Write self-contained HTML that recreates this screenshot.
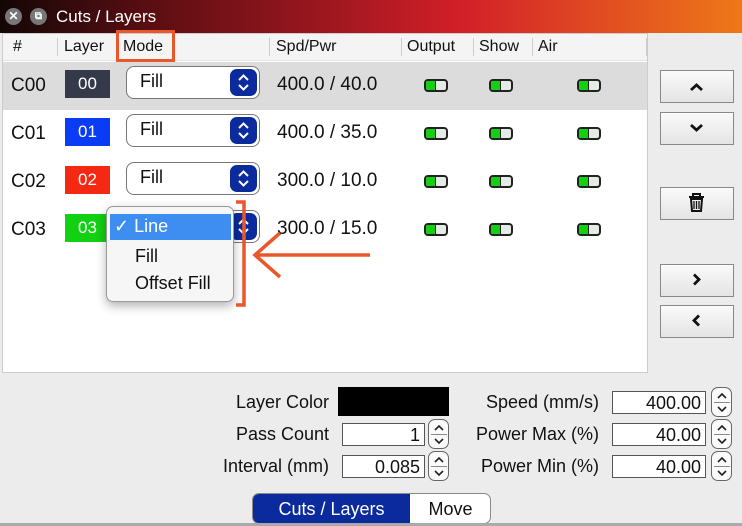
<!DOCTYPE html>
<html><head><style>
*{margin:0;padding:0;box-sizing:border-box}
body{width:742px;height:526px;background:#ececec;font-family:"Liberation Sans",sans-serif;position:relative;overflow:hidden;color:#111}
.a{position:absolute}
.title{left:0;top:0;width:742px;height:33px;background:linear-gradient(90deg,#140606 0%,#5a0e12 20%,#98161e 42%,#d21f28 62%,#e04a22 80%,#ee7818 100%)}
.tbtn{width:17px;height:17px;border-radius:50%;background:#777;top:8px;color:#fff;font-size:12px;text-align:center;line-height:17px;font-weight:bold}
.table{left:2px;top:33px;width:646px;height:340px;background:#fff;border:1px solid #ccc}
.hdr{left:0;top:0;width:644px;height:27px;background:#f4f4f4;border-bottom:1px solid #e2e2e2;font-size:16px}
.hdr span{position:absolute;top:4px}
.sep{position:absolute;top:4px;width:1px;height:18px;background:#ccc}
.row{left:0;width:644px;height:48px;font-size:19px}
.row .c{position:absolute;left:8px;top:13px}
.sw{position:absolute;left:62px;top:8px;width:45px;height:28px;color:#fff;font-size:17px;text-align:center;line-height:28px}
.dd{position:absolute;left:123px;top:4px;width:134px;height:33px;border:1px solid #777;border-radius:8px;background:#fff;font-size:18px;padding:4px 0 0 13px}
.dd i{position:absolute;right:2px;top:2px;width:27px;height:27px;border-radius:7px;background:#0b2a9c}
.dd i svg{position:absolute;left:0;top:0}
.sp{position:absolute;left:274px;top:12px}
.tg{position:absolute;top:17px;width:24px;height:13px;border:2px solid #222;border-radius:4px;background:#e4ece4;overflow:hidden}
.tg b{position:absolute;left:0;top:0;width:10px;height:9px;background:#12d012;border-right:1.5px solid #222}
.btn{left:660px;width:74px;height:33px;border:1.5px solid #888;background:linear-gradient(#fafafa,#e4e4e4)}
.lbl{font-size:18px;text-align:right}
.inp{background:#fff;border:1px solid #555;height:23px;font-size:18px;text-align:right;padding-right:4px;line-height:22px}
.spin{width:21px;height:30px;border:1px solid #666;border-radius:7px;background:#fafafa}
.spin svg{position:absolute;left:0;top:0}
</style></head><body>
<div class="a title"></div>
<div class="a tbtn" style="left:5px">✕</div>
<div class="a tbtn" style="left:30px;font-size:10px">⧉</div>
<div class="a" style="left:56px;top:7px;color:#fff;font-size:17px">Cuts / Layers</div>

<div class="a table">
 <div class="a hdr">
  <span style="left:10px">#</span><div class="sep" style="left:54px"></div>
  <span style="left:61px">Layer</span>
  <span style="left:120px">Mode</span><div class="sep" style="left:266px"></div>
  <span style="left:273px">Spd/Pwr</span><div class="sep" style="left:398px"></div>
  <span style="left:404px">Output</span><div class="sep" style="left:470px"></div>
  <span style="left:476px">Show</span><div class="sep" style="left:529px"></div>
  <span style="left:535px">Air</span><div class="sep" style="left:643px"></div>
 </div>
 <div class="a row" style="top:28px;background:#dcdcdc"><span class="c">C00</span><div class="sw" style="background:#343a4a">00</div><div class="dd">Fill<i><svg width="27" height="27"><path d="M9 11l4.5-4.5L18 11M9 16l4.5 4.5L18 16" stroke="#fff" stroke-width="2" fill="none"/></svg></i></div><span class="sp">400.0 / 40.0</span><div class="tg" style="left:421px"><b></b></div><div class="tg" style="left:486px"><b></b></div><div class="tg" style="left:574px"><b></b></div></div>
 <div class="a row" style="top:76px"><span class="c">C01</span><div class="sw" style="background:#0a3cf5">01</div><div class="dd">Fill<i><svg width="27" height="27"><path d="M9 11l4.5-4.5L18 11M9 16l4.5 4.5L18 16" stroke="#fff" stroke-width="2" fill="none"/></svg></i></div><span class="sp">400.0 / 35.0</span><div class="tg" style="left:421px"><b></b></div><div class="tg" style="left:486px"><b></b></div><div class="tg" style="left:574px"><b></b></div></div>
 <div class="a row" style="top:124px"><span class="c">C02</span><div class="sw" style="background:#f52812">02</div><div class="dd">Fill<i><svg width="27" height="27"><path d="M9 11l4.5-4.5L18 11M9 16l4.5 4.5L18 16" stroke="#fff" stroke-width="2" fill="none"/></svg></i></div><span class="sp">300.0 / 10.0</span><div class="tg" style="left:421px"><b></b></div><div class="tg" style="left:486px"><b></b></div><div class="tg" style="left:574px"><b></b></div></div>
 <div class="a row" style="top:172px"><span class="c">C03</span><div class="sw" style="background:#12d012">03</div><div class="dd">Fill<i><svg width="27" height="27"><path d="M9 11l4.5-4.5L18 11M9 16l4.5 4.5L18 16" stroke="#fff" stroke-width="2" fill="none"/></svg></i></div><span class="sp">300.0 / 15.0</span><div class="tg" style="left:421px"><b></b></div><div class="tg" style="left:486px"><b></b></div><div class="tg" style="left:574px"><b></b></div></div>
</div>
<div class="a" style="left:116px;top:30px;width:59px;height:32px;border:3px solid #e8582a"></div>

<div class="a" style="left:106px;top:206px;width:128px;height:96px;background:#f6f6f6;border:1px solid #999;border-radius:7px;box-shadow:0 4px 10px rgba(0,0,0,.3);font-size:18px">
 <div class="a" style="left:3px;top:7px;width:121px;height:26px;background:#3d8ef0;color:#fff;padding:2px 0 0 4px">✓ Line</div>
 <div class="a" style="left:28px;top:39px">Fill</div>
 <div class="a" style="left:28px;top:66px">Offset Fill</div>
</div>
<svg class="a" style="left:230px;top:195px" width="150" height="115"><g stroke="#e8582a" stroke-width="3.5" fill="none"><path d="M6 7H14V110H6"/><path d="M140 60H26M50 38L25 60L50 82"/></g></svg>

<div class="a" style="left:647px;top:33px;width:1px;height:340px;background:#ccc"></div>
<div class="a btn" style="top:70px"><svg width="71" height="30"><path d="M30 19l5.5-5 5.5 5" stroke="#111" stroke-width="2.8" fill="none"/></svg></div>
<div class="a btn" style="top:112px"><svg width="71" height="30"><path d="M30 12l5.5 5 5.5-5" stroke="#111" stroke-width="2.8" fill="none"/></svg></div>
<div class="a btn" style="top:187px"><svg width="71" height="30"><g stroke="#111" stroke-width="2" fill="none"><path d="M28 9h15M32 9V6h7v3M30 11h11l-1 12h-9z"/><path d="M33 13v8M35.5 13v8M38 13v8" stroke-width="1.3"/></g></svg></div>
<div class="a btn" style="top:264px"><svg width="71" height="30"><path d="M33 9.5l5 5-5 5" stroke="#111" stroke-width="2.8" fill="none"/></svg></div>
<div class="a btn" style="top:305px"><svg width="71" height="30"><path d="M38 9.5l-5 5 5 5" stroke="#111" stroke-width="2.8" fill="none"/></svg></div>

<div class="a lbl" style="left:150px;width:179px;top:392px">Layer Color</div>
<div class="a" style="left:338px;top:387px;width:111px;height:29px;background:#000"></div>
<div class="a lbl" style="left:150px;width:179px;top:424px">Pass Count</div>
<div class="a inp" style="left:342px;top:423px;width:83px">1</div>
<div class="a spin" style="left:428px;top:419px"><svg width="20" height="29"><path d="M6 10l4-4 4 4M6 19l4 4 4-4" stroke="#222" stroke-width="1.6" fill="none"/><path d="M2 14.5h16" stroke="#888"/></svg></div>
<div class="a lbl" style="left:150px;width:179px;top:456px">Interval (mm)</div>
<div class="a inp" style="left:342px;top:455px;width:83px">0.085</div>
<div class="a spin" style="left:428px;top:451px"><svg width="20" height="29"><path d="M6 10l4-4 4 4M6 19l4 4 4-4" stroke="#222" stroke-width="1.6" fill="none"/><path d="M2 14.5h16" stroke="#888"/></svg></div>

<div class="a lbl" style="left:420px;width:179px;top:392px">Speed (mm/s)</div>
<div class="a inp" style="left:612px;top:391px;width:94px">400.00</div>
<div class="a spin" style="left:711px;top:387px"><svg width="20" height="29"><path d="M6 10l4-4 4 4M6 19l4 4 4-4" stroke="#222" stroke-width="1.6" fill="none"/><path d="M2 14.5h16" stroke="#888"/></svg></div>
<div class="a lbl" style="left:420px;width:179px;top:424px">Power Max (%)</div>
<div class="a inp" style="left:612px;top:423px;width:94px">40.00</div>
<div class="a spin" style="left:711px;top:419px"><svg width="20" height="29"><path d="M6 10l4-4 4 4M6 19l4 4 4-4" stroke="#222" stroke-width="1.6" fill="none"/><path d="M2 14.5h16" stroke="#888"/></svg></div>
<div class="a lbl" style="left:420px;width:179px;top:456px">Power Min (%)</div>
<div class="a inp" style="left:612px;top:455px;width:94px">40.00</div>
<div class="a spin" style="left:711px;top:451px"><svg width="20" height="29"><path d="M6 10l4-4 4 4M6 19l4 4 4-4" stroke="#222" stroke-width="1.6" fill="none"/><path d="M2 14.5h16" stroke="#888"/></svg></div>

<div class="a" style="left:252px;top:493px;width:239px;height:31px;border:1px solid #888;border-radius:7px;background:#fff;overflow:hidden;font-size:18px">
 <div class="a" style="left:0;top:0;width:157px;height:31px;background:#0a2a9e;color:#fff;text-align:center;line-height:31px">Cuts / Layers</div>
 <div class="a" style="left:157px;top:0;width:81px;text-align:center;line-height:31px">Move</div>
</div>
<div class="a" style="left:0;top:523px;width:742px;height:3px;background:#aaa"></div>
</body></html>
